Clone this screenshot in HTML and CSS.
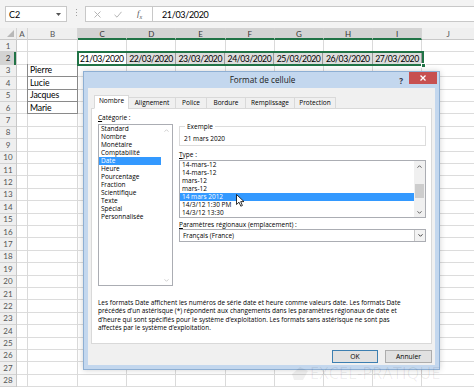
FILE: index.html
```html
<!DOCTYPE html>
<html lang="fr">
<head>
<meta charset="utf-8">
<title>Format de cellule</title>
<link rel="stylesheet" href="styles.css">
</head>
<body>
<div class="fbar">
  <div class="namebox"><span>C2</span><svg width="5" height="3" viewBox="0 0 5 3"><path d="M0 0H5L2.5 3Z" fill="#555"/></svg></div>
  <div class="grip"><i></i><i></i><i></i></div>
  <div class="fbtns">
    <svg class="ico-x" width="7" height="7" viewBox="0 0 7 7"><path d="M0.5 0.5L6.5 6.5M6.5 0.5L0.5 6.5" stroke="#b5b5b5" stroke-width="1"/></svg>
    <svg class="ico-ok" width="8" height="7" viewBox="0 0 8 7"><path d="M0.5 3.8L3 6.2L7.5 0.8" fill="none" stroke="#b5b5b5" stroke-width="1"/></svg>
    <span class="fx">f<sub>x</sub></span>
  </div>
  <div class="finput">21/03/2020</div>
</div>

<div class="sheet">
  <div class="col rh">
    <div class="hd corner"><svg width="7" height="7" viewBox="0 0 7 7"><path d="M7 0V7H0Z" fill="#b8b8b8"/></svg></div>
    <div class="cbody rbody">
      <div>1</div><div class="on">2</div><div>3</div><div>4</div><div>5</div><div>6</div><div>7</div>
      <div>8</div><div>9</div><div>10</div><div>11</div><div>12</div><div>13</div><div>14</div>
      <div>15</div><div>16</div><div>17</div><div>18</div><div>19</div><div>20</div><div>21</div>
      <div>22</div><div>23</div><div>24</div><div>25</div><div>26</div><div>27</div><div>28</div>
    </div>
  </div>
  <div class="col ca"><div class="hd">A</div><div class="cbody"></div></div>
  <div class="col cb"><div class="hd">B</div>
    <div class="cbody">
      <div class="c name r3">Pierre</div>
      <div class="c name r4">Lucie</div>
      <div class="c name r5">Jacques</div>
      <div class="c name r6">Marie</div>
    </div>
  </div>
  <div class="col cx"><div class="hd sel">C</div><div class="cbody"><div class="c date act r2">21/03/2020</div></div></div>
  <div class="col cx"><div class="hd sel">D</div><div class="cbody"><div class="c date r2">22/03/2020</div></div></div>
  <div class="col cx"><div class="hd sel">E</div><div class="cbody"><div class="c date r2">23/03/2020</div></div></div>
  <div class="col cx"><div class="hd sel">F</div><div class="cbody"><div class="c date r2">24/03/2020</div></div></div>
  <div class="col cx"><div class="hd sel">G</div><div class="cbody"><div class="c date r2">25/03/2020</div></div></div>
  <div class="col cx"><div class="hd sel">H</div><div class="cbody"><div class="c date r2">26/03/2020</div></div></div>
  <div class="col cx"><div class="hd sel">I</div><div class="cbody"><div class="c date r2">27/03/2020</div></div></div>
  <div class="col cj"><div class="hd">J</div><div class="cbody"></div></div>
</div>
<div class="selbox"><span class="handle"></span></div>

<div class="dlg">
  <div class="tbar">
    <span></span>
    <div class="ttl">Format de cellule</div>
    <div class="tctl">
      <span class="help">?</span>
      <span class="close"><svg width="6" height="6" viewBox="0 0 6 6"><path d="M0.5 0.5L5.5 5.5M5.5 0.5L0.5 5.5" stroke="#fff" stroke-width="1.3"/></svg></span>
    </div>
  </div>
  <div class="client">
    <div class="tabs">
      <div class="tab on">Nombre</div>
      <div class="tab w-al">Alignement</div>
      <div class="tab w-po">Police</div>
      <div class="tab w-bo">Bordure</div>
      <div class="tab w-re">Remplissage</div>
      <div class="tab w-pr">Protection</div>
    </div>
    <div class="panel">
      <div class="top">
        <div class="lcol">
          <div class="lbl"><u>C</u>atégorie :</div>
          <div class="list cat">
            <div class="items">
              <div>Standard</div>
              <div>Nombre</div>
              <div>Monétaire</div>
              <div>Comptabilité</div>
              <div class="hl">Date</div>
              <div>Heure</div>
              <div>Pourcentage</div>
              <div>Fraction</div>
              <div>Scientifique</div>
              <div>Texte</div>
              <div>Spécial</div>
              <div>Personnalisée</div>
            </div>
            <div class="sb dis">
              <div class="arr"><svg width="5" height="3" viewBox="0 0 5 3"><path d="M0.5 2.7L2.5 0.7L4.5 2.7" fill="none" stroke="#cfcfcf"/></svg></div>
              <div class="track"></div>
              <div class="arr"><svg width="5" height="3" viewBox="0 0 5 3"><path d="M0.5 0.3L2.5 2.3L4.5 0.3" fill="none" stroke="#cfcfcf"/></svg></div>
            </div>
          </div>
        </div>
        <div class="rcol">
          <fieldset class="ex"><legend>Exemple</legend><div>21 mars 2020</div></fieldset>
          <div class="lbl lt"><u>T</u>ype :</div>
          <div class="list typ">
            <div class="items">
              <div>14-mars-12</div>
              <div>14-mars-12</div>
              <div>mars-12</div>
              <div>mars-12</div>
              <div class="hl">14 mars 2012</div>
              <div>14/3/12 1:30 PM</div>
              <div>14/3/12 13:30</div>
            </div>
            <div class="sb">
              <div class="arr"><svg width="5" height="3" viewBox="0 0 5 3"><path d="M0.5 2.7L2.5 0.7L4.5 2.7" fill="none" stroke="#606060"/></svg></div>
              <div class="track"><div class="thumb"></div></div>
              <div class="arr"><svg width="5" height="3" viewBox="0 0 5 3"><path d="M0.5 0.3L2.5 2.3L4.5 0.3" fill="none" stroke="#606060"/></svg></div>
            </div>
          </div>
          <div class="lbl lp"><u>P</u>aramètres régionaux (emplacement) :</div>
          <div class="combo"><span>Français (France)</span><span class="dd"><svg width="5" height="3" viewBox="0 0 5 3"><path d="M0.5 0.3L2.5 2.3L4.5 0.3" fill="none" stroke="#404040"/></svg></span></div>
        </div>
      </div>
      <p class="desc">Les formats Date affichent les numéros de série date et heure comme valeurs date. Les formats Date précédés d’un astérisque (*) répondent aux changements dans les paramètres régionaux de date et d’heure qui sont spécifiés pour le système d’exploitation. Les formats sans astérisque ne sont pas affectés par le système d’exploitation.</p>
    </div>
    <div class="btns">
      <button class="btn ok">OK</button>
      <button class="btn cancel">Annuler</button>
    </div>
  </div>
</div>

<div class="wm">
  <svg width="18" height="16" viewBox="0 0 18 16"><path d="M1 9L9 2L17 6L12 15L3 15Z" fill="#000" fill-opacity="0.06"/></svg>
  <span>EXCEL-PRATIQUE</span>
</div>

<svg class="cursor" width="9" height="13" viewBox="0 0 9 13"><path d="M0.5 0.5V10.5L3 8.2L4.8 12.2L6.4 11.5L4.7 7.6H8Z" fill="#fff" stroke="#000" stroke-width="0.8" stroke-linejoin="round"/></svg>
</body>
</html>
```

FILE: styles.css
```css
* { box-sizing: border-box; margin: 0; padding: 0; }

body {
  width: 474px;
  height: 387px;
  overflow: hidden;
  background: #fff;
  font-family: Lato, "Liberation Sans", sans-serif;
  position: relative;
  color: #000;
}

/* ---------- formula bar ---------- */
.fbar {
  height: 28px;
  background: #f3f3f3;
  display: flex;
  align-items: flex-start;
  padding: 6px 0 0 5px;
}
.namebox {
  width: 62px;
  height: 16px;
  background: #fff;
  border: 1px solid #c8c8c8;
  display: flex;
  align-items: center;
  justify-content: space-between;
  padding: 0 5px 0 3px;
  font-size: 9px;
}
.grip {
  margin: 3px 7px 0 9px;
  width: 2px;
  display: flex;
  flex-direction: column;
  gap: 2px;
}
.grip i { display: block; width: 1px; height: 1px; background: #a0a0a0; }
.fbtns {
  width: 68px;
  height: 16px;
  background: #fff;
  border: 1px solid #c8c8c8;
  display: flex;
  align-items: center;
  padding-left: 8px;
}
.ico-ok { margin-left: 13px; }
.fx {
  margin-left: 15px;
  font-family: "Liberation Serif", serif;
  font-style: italic;
  font-size: 9px;
  color: #555;
}
.fx sub { font-size: 6px; }
.finput {
  flex: 1;
  height: 16px;
  margin-left: -1px;
  background: #fff;
  border: 1px solid #c8c8c8;
  border-right: none;
  font-size: 9px;
  letter-spacing: -0.35px;
  padding-left: 9px;
  display: flex;
  align-items: center;
}

/* ---------- sheet ---------- */
.sheet { display: flex; height: 359px; }
.col {
  flex: none;
  display: flex;
  flex-direction: column;
  border-right: 1px solid #dadada;
}
.rh { width: 17px; border-right-color: #c8c8c8; background: #efefef; }
.ca { width: 11px; }
.cb { width: 50px; }
.cx { width: 49.2px; }
.cj { flex: 1; border-right: none; }

.hd {
  height: 12px;
  background: #efefef;
  border-bottom: 1px solid #c8c8c8;
  border-right: 1px solid #d5d5d5;
  margin-right: -1px;
  display: flex;
  align-items: center;
  justify-content: center;
  font-size: 8px;
  color: #555;
}
.hd.corner { justify-content: flex-end; align-items: flex-end; padding: 0 2px 2px 0; }
.hd.sel {
  background: #d3d3d3;
  border-bottom: 2px solid #217346;
  color: #333;
  padding-top: 1px;
}

.cbody {
  flex: 1;
  display: grid;
  grid-template-rows: repeat(28, 12.4px);
  background-image: repeating-linear-gradient(to bottom, transparent 0, transparent 11.4px, #dcdcdc 11.4px, #dcdcdc 12.4px);
}
.rbody { background-color: #efefef; background-image: repeating-linear-gradient(to bottom, transparent 0, transparent 11.4px, #d2d2d2 11.4px, #d2d2d2 12.4px); }
.rbody div {
  font-size: 8px;
  color: #555;
  display: flex;
  align-items: center;
  justify-content: center;
  padding-bottom: 1px;
}
.rbody .on { background: #d3d3d3; box-shadow: inset -2px 0 #217346; color: #333; }

.c {
  font-size: 8.7px;
  display: flex;
  align-items: center;
  white-space: nowrap;
  padding: 0 2px 1px;
}
.r2 { grid-row: 2; }
.r3 { grid-row: 3; }
.r4 { grid-row: 4; }
.r5 { grid-row: 5; }
.r6 { grid-row: 6; }
.name {
  margin: -1px -1px 0 -1px;
  padding-left: 3px;
  letter-spacing: -0.1px;
  box-shadow: inset 1px 1px 0 #8a8a8a, inset -1px -1px 0 #8a8a8a;
}
.r3.name { box-shadow: inset 1px 0 0 #8a8a8a, inset -1px -1px 0 #8a8a8a; }
.date {
  justify-content: flex-end;
  background: #dddddd;
  box-shadow: inset -1px 0 #9a9a9a;
  padding-right: 3px;
  letter-spacing: -0.45px;
}
.date.act { background: #fff; }

.selbox {
  position: absolute;
  left: 77px;
  top: 51px;
  width: 346.5px;
  height: 15px;
  border: 2px solid #217346;
}
.handle {
  position: absolute;
  right: -4px;
  bottom: -4px;
  width: 5px;
  height: 5px;
  background: #217346;
  border: 1px solid #fff;
}

/* ---------- dialog ---------- */
.dlg {
  position: absolute;
  left: 83px;
  top: 71px;
  width: 357px;
  height: 299px;
  background: #c3d7ee;
  border: 1px solid #8eafd3;
  padding: 0 4px 4px;
  display: flex;
  flex-direction: column;
  font-family: "Open Sans", "Noto Sans", sans-serif;
  font-size: 6.5px;
  box-shadow: 0 0 6px rgba(0,0,0,0.18);
}
.tbar {
  height: 16px;
  display: grid;
  grid-template-columns: 1fr auto 1fr;
  align-items: start;
  margin-right: -2px;
}
.ttl { font-size: 8.2px; line-height: 16px; color: #1a1a1a; }
.tctl { justify-self: end; display: flex; align-items: flex-start; }
.help { font-size: 8px; font-weight: 700; color: #334; margin: 3px 6px 0 0; }
.close {
  width: 28px;
  height: 12px;
  background: #c75050;
  display: flex;
  align-items: center;
  justify-content: center;
}

.client {
  flex: 1;
  background: #f0f0f0;
  padding: 7px 3px 2px;
  display: flex;
  flex-direction: column;
}
.tabs {
  height: 14px;
  display: flex;
  align-items: flex-end;
  margin: 0 0 -1px 4px;
  position: relative;
  z-index: 1;
}
.tab {
  height: 12px;
  border: 1px solid #d9d9d9;
  background: #f0f0f0;
  margin-left: -1px;
  display: flex;
  align-items: center;
  justify-content: center;
  font-size: 6.5px;
  line-height: 1;
}
.tab.on {
  height: 14px;
  width: 35px;
  background: #fff;
  border-bottom-color: #fff;
  margin-left: -1px;
  padding-bottom: 2px;
}
.w-al { width: 48px; }
.w-po { width: 32px; }
.w-bo { width: 40px; }
.w-re { width: 50px; }
.w-pr { width: 42px; }

.panel {
  height: 236px;
  background: #fff;
  border: 1px solid #d9d9d9;
  padding: 4px 5px 0 6px;
  display: flex;
  flex-direction: column;
}
.top { display: flex; gap: 6px; }
.lcol { width: 75px; }
.rcol { flex: 1; display: flex; flex-direction: column; }
.lbl { height: 9px; line-height: 9px; white-space: nowrap; }
.lcol .lbl { margin-bottom: 2px; }
.lt { margin-top: 4px; }
.lp { margin-top: 2px; }

.list {
  border: 1px solid #abadb3;
  display: flex;
  background: #fff;
}
.cat { height: 162px; }
.typ { height: 58px; margin-top: 1px; }
.items { flex: 1; }
.items div { height: 8px; line-height: 8px; padding-left: 2px; white-space: nowrap; }
.items .hl { background: #3399ff; color: #fff; }
.sb {
  width: 11px;
  display: flex;
  flex-direction: column;
  background: #f0f0f0;
}
.sb.dis { background: #fff; }
.arr { height: 10px; display: flex; align-items: center; justify-content: center; }
.track { flex: 1; }
.thumb { width: 9px; height: 14px; margin: 13px auto 0; background: #cdcdcd; }

.ex {
  margin-top: 9px;
  border: 1px solid #dcdcdc;
  padding: 3px 4px 2px;
  min-width: 0;
}
.ex legend { padding: 0 2px; margin-left: 1px; line-height: 9px; }
.ex div { line-height: 9px; }

.combo {
  height: 13px;
  border: 1px solid #abadb3;
  display: flex;
  align-items: center;
  justify-content: space-between;
  padding-left: 3px;
}
.dd {
  width: 11px;
  height: 11px;
  border-left: 1px solid #c6c6c6;
  background: #f2f2f2;
  display: flex;
  align-items: center;
  justify-content: center;
}

.desc {
  margin-top: 13px;
  line-height: 8.3px;
  font-size: 6.45px;
  width: 314px;
}

.btns {
  display: flex;
  justify-content: flex-end;
  gap: 7px;
  margin-top: 6px;
}
.btn {
  height: 13px;
  font-family: inherit;
  font-size: 6.8px;
  background: #e1e1e1;
  border: 1px solid #adadad;
  color: #000;
}
.ok { width: 46px; border-color: #3c7fb1; }
.cancel { width: 47px; }

/* ---------- overlays ---------- */
.wm {
  position: absolute;
  left: 291px;
  top: 364px;
  height: 18px;
  display: flex;
  align-items: center;
  gap: 1px;
  pointer-events: none;
}
.wm span {
  font-family: "Open Sans", sans-serif;
  font-size: 16px;
  line-height: 16px;
  letter-spacing: 0.3px;
  color: rgba(0,0,0,0.07);
}
.cursor { position: absolute; left: 236px; top: 194px; }
```
